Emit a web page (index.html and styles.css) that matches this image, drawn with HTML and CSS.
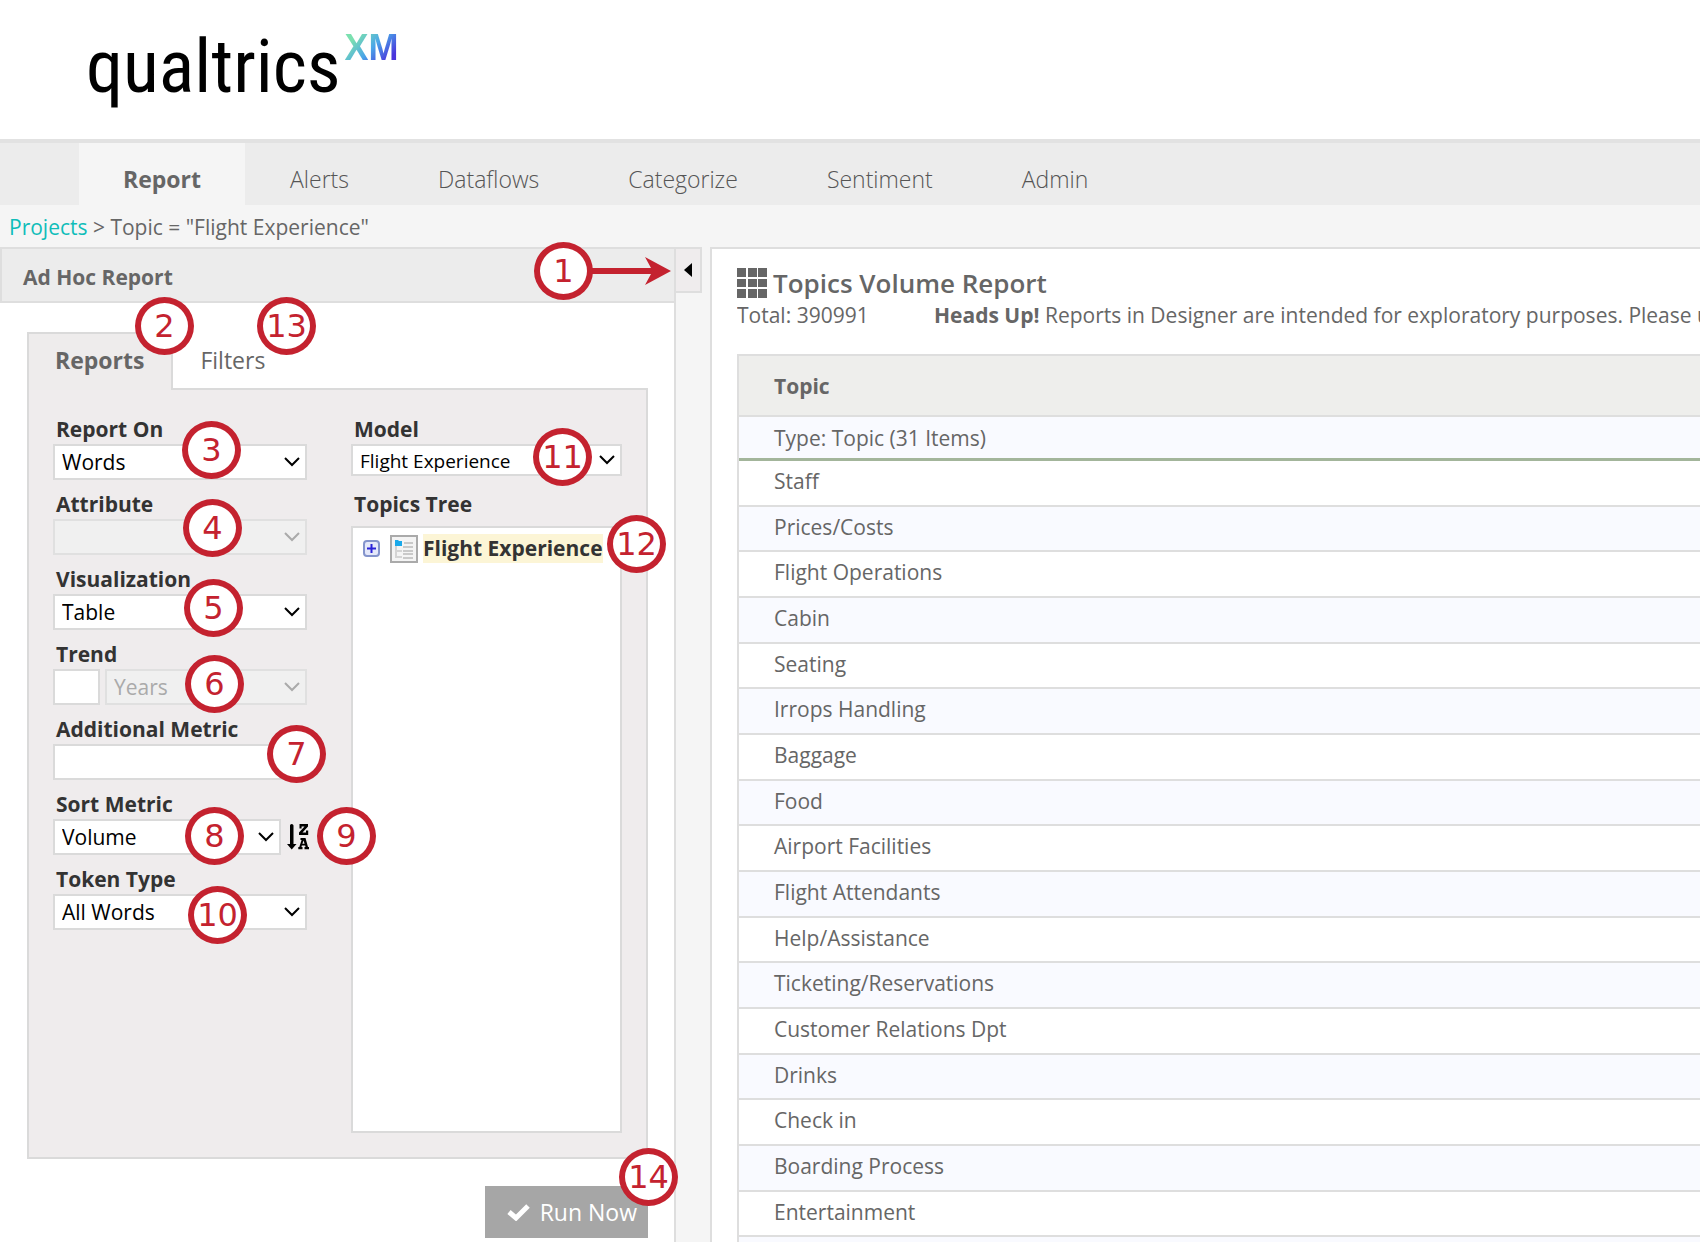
FILE: index.html
```html
<!DOCTYPE html>
<html lang="en">
<head>
<meta charset="utf-8">
<title>Topics Volume Report</title>
<link rel="stylesheet" href="styles.css">
</head>
<body>
<div class="app">
  <header class="masthead">
    <div class="logo">qualtrics<sup class="logo-xm">XM</sup></div>
  </header>

  <nav class="main-nav">
    <a class="active" href="#">Report</a>
    <a href="#">Alerts</a>
    <a href="#">Dataflows</a>
    <a href="#">Categorize</a>
    <a href="#">Sentiment</a>
    <a href="#">Admin</a>
  </nav>

  <div class="breadcrumb"><a href="#">Projects</a> &gt; Topic = "Flight Experience"</div>

  <main class="workspace">
    <section class="sidebar">
      <h2 class="sidebar-title">Ad Hoc Report</h2>
      <div class="sidebar-body">
        <div class="tabs">
          <button class="tab tab-active" type="button">Reports</button>
          <button class="tab" type="button">Filters</button>
        </div>
        <form class="settings">
          <div class="fields">
            <div class="field">
              <label for="report-on">Report On</label>
              <select id="report-on"><option>Words</option></select>
            </div>
            <div class="field">
              <label for="attribute">Attribute</label>
              <select id="attribute" disabled><option></option></select>
            </div>
            <div class="field">
              <label for="visualization">Visualization</label>
              <select id="visualization"><option>Table</option></select>
            </div>
            <div class="field">
              <label for="trend">Trend</label>
              <div class="field-row">
                <input class="trend-count" id="trend" type="text">
                <select aria-label="Trend period" disabled><option>Years</option></select>
              </div>
            </div>
            <div class="field">
              <label for="metric">Additional Metric</label>
              <input id="metric" type="text">
            </div>
            <div class="field">
              <label for="sort">Sort Metric</label>
              <div class="field-row">
                <select id="sort"><option>Volume</option></select>
                <button class="sort-order" type="button" aria-label="Sort descending">
                  <svg width="22" height="26" viewBox="0 0 22 26"><path d="M3 1.500Q3 0 4.700 0T6.500 1.500V20H9.500L4.700 25.500 0 20H3z"/><path d="M12.500 0H21V2.500L15.500 8.500H19V6.500H21.200V11H12V8.500L17.500 2.500H14.600V4.500H12.500z"/><path fill-rule="evenodd" d="M13.500 14H18.500L21 23H22V25.200H17.500V23H18.500L18.200 21.600H14.800L14.500 23H15.500V25.200H11.300V23H12.300L14.600 16H13.500zM16.500 16.500L15.400 19.700H17.600z"/></svg>
                </button>
              </div>
            </div>
            <div class="field">
              <label for="token">Token Type</label>
              <select id="token"><option>All Words</option></select>
            </div>
          </div>
          <div class="model">
            <label for="model">Model</label>
            <select class="model-select" id="model"><option>Flight Experience</option></select>
            <h3 class="tree-title">Topics Tree</h3>
            <div class="tree">
              <div class="tree-node">
                <button class="expander" type="button" aria-label="Expand">
                  <svg width="17" height="17" viewBox="0 0 17 17"><rect x="1" y="1" width="15" height="15" rx="3" fill="#e4e8fa" stroke="#8494cc" stroke-width="2"/><path d="M8.500 4v9M4 8.500h9" stroke="#2a22d8" stroke-width="2"/></svg>
                </button>
                <svg class="node-icon" width="28" height="28" viewBox="0 0 28 28"><rect x="1" y="1" width="26" height="26" fill="#f4f4f4" stroke="#aaa" stroke-width="2"/><path d="M6 11v11h6M6 16h6" stroke="#d4d4d4" stroke-width="2" fill="none"/><path d="M14 8h9M13 12h10M13 16h10M13 19h10M13 23h10" stroke="#c9c9c9" stroke-width="2" fill="none"/><path d="M5 5h3l1 1h3v5H5z" fill="#1ba9ea"/></svg>
                <span class="node-label">Flight Experience</span>
              </div>
            </div>
          </div>
        </form>
        <button class="run" type="button">
          <svg width="23" height="18" viewBox="0 0 23 18"><path d="M2 9l7 6L21 3" fill="none" stroke="#fff" stroke-width="5"/></svg>
          Run Now
        </button>
      </div>
    </section>

    <button class="collapse" type="button" aria-label="Collapse panel">
      <svg width="8" height="14" viewBox="0 0 8 14"><path d="M8 0v14L0 7z"/></svg>
    </button>

    <section class="report">
      <h1 class="report-title">
        <svg width="30" height="30" viewBox="0 0 30 30"><path d="M0 0h9v9H0zM11 0h9v9h-9zM21 0h9v9h-9zM0 11h9v8H0zM11 11h9v8h-9zM21 11h9v8h-9zM0 21h9v9H0zM11 21h9v9h-9zM21 21h9v9h-9z"/></svg>
        Topics Volume Report
      </h1>
      <p class="summary"><span class="total">Total: 390991</span><span><strong>Heads Up!</strong> Reports in Designer are intended for exploratory purposes. Please use</span></p>
      <table class="topics">
        <thead><tr><th scope="col">Topic</th></tr></thead>
        <tbody>
          <tr class="type-row"><td>Type: Topic (31 Items)</td></tr>
          <tr><td>Staff</td></tr>
          <tr><td>Prices/Costs</td></tr>
          <tr><td>Flight Operations</td></tr>
          <tr><td>Cabin</td></tr>
          <tr><td>Seating</td></tr>
          <tr><td>Irrops Handling</td></tr>
          <tr><td>Baggage</td></tr>
          <tr><td>Food</td></tr>
          <tr><td>Airport Facilities</td></tr>
          <tr><td>Flight Attendants</td></tr>
          <tr><td>Help/Assistance</td></tr>
          <tr><td>Ticketing/Reservations</td></tr>
          <tr><td>Customer Relations Dpt</td></tr>
          <tr><td>Drinks</td></tr>
          <tr><td>Check in</td></tr>
          <tr><td>Boarding Process</td></tr>
          <tr><td>Entertainment</td></tr>
          <tr><td></td></tr>
        </tbody>
      </table>
    </section>
  </main>

  <svg class="arrow" width="80" height="28" viewBox="0 0 80 28"><path d="M0 11h60L54 0l26 14-26 14 6-11H0z"/></svg>
  <span class="badge b1">1</span>
  <span class="badge b2">2</span>
  <span class="badge b3">3</span>
  <span class="badge b4">4</span>
  <span class="badge b5">5</span>
  <span class="badge b6">6</span>
  <span class="badge b7">7</span>
  <span class="badge b8">8</span>
  <span class="badge b9">9</span>
  <span class="badge b10">10</span>
  <span class="badge b11">11</span>
  <span class="badge b12">12</span>
  <span class="badge b13">13</span>
  <span class="badge b14">14</span>
</div>
</body>
</html>
```
FILE: styles.css
```css
* { box-sizing: border-box; }

body {
  margin: 0;
  background: #f5f5f5;
  color: #666;
  font: 21px/30px "Open Sans", "Noto Sans", sans-serif;
}

h1, h2, h3, p { margin: 0; }

button, input, select { font: inherit; color: inherit; border-radius: 0; }

button { padding: 0; border: 0; background: none; }

.app {
  position: relative;
  display: flex;
  flex-direction: column;
  height: 100vh;
  overflow: hidden;
}

/* Header */
.masthead {
  flex: none;
  height: 139px;
  padding: 17px 0 0 86px;
  background: #fff;
}

.logo {
  display: flex;
  align-items: flex-start;
  gap: 4px;
  color: #000;
  font: 74px/100px "Roboto Condensed", "Liberation Sans", sans-serif;
}

.logo-xm {
  margin-top: 11px;
  font: bold 36px/40px "Liberation Sans", sans-serif;
  background: linear-gradient(135deg, #7be0b0 20%, #4aa6e8 50%, #4a35dc 80%);
  background-clip: text;
  color: transparent;
}

.main-nav {
  flex: none;
  display: flex;
  gap: 1px;
  height: 66px;
  padding-left: 79px;
  border-top: 4px solid #e2e2e2;
  background: #ececec;
}

.main-nav a {
  padding: 21px 44px 0;
  color: #555;
  font-size: 23px;
  font-weight: 300;
  text-decoration: none;
}

.main-nav .active { background: #f5f5f5; color: #666; font-weight: 700; }

.breadcrumb { flex: none; height: 42px; padding: 7px 9px 0; }
.breadcrumb a { color: #0fbdb9; text-decoration: none; }

.workspace { flex: 1; display: flex; min-height: 0; }

/* Left panel */
.sidebar {
  flex: none;
  width: 676px;
  border-top: 2px solid #dedede;
  border-right: 2px solid #dedede;
  background: #fff;
}

.sidebar-title {
  height: 54px;
  padding: 13px 21px 0;
  border-bottom: 2px solid #dedede;
  border-left: 2px solid #dedede;
  background: #ececec;
  font-size: 21px;
  line-height: 30px;
}

.sidebar-body { display: flex; flex-direction: column; padding: 29px 26px 0 27px; }

.tabs { display: flex; height: 56px; }

.tab { padding: 0 27px; font-size: 23px; line-height: 56px; }

.tab-active {
  position: relative;
  height: 58px;
  padding: 0 27px 5px 26px;
  border: 2px solid #dadada;
  border-bottom: 0;
  background: #eeecec;
  font-weight: 700;
  line-height: 30px;
}

.settings {
  display: flex;
  gap: 44px;
  height: 771px;
  padding: 24px;
  border: 2px solid #dadada;
  background: #efeced;
}

.fields { flex: none; width: 254px; }

.field { height: 75px; }

label, .tree-title {
  display: block;
  padding-left: 3px;
  color: #333;
  font-size: 21px;
  font-weight: 700;
  line-height: 30px;
}

.field-row { display: flex; gap: 5px; }

select, input {
  display: block;
  width: 100%;
  height: 36px;
  padding: 0 7px;
  border: 2px solid #dadada;
  background: #fff;
  color: #000;
}

select {
  flex: 1;
  appearance: none;
  background: #fff url("data:image/svg+xml,%3Csvg xmlns='http://www.w3.org/2000/svg' width='16' height='10'%3E%3Cpath d='M1 1l7 7 7-7' fill='none' stroke='black' stroke-width='2'/%3E%3C/svg%3E") no-repeat right 5px center;
}

select:disabled {
  border-color: #e0e0e0;
  background-color: #f0f0f0;
  background-image: url("data:image/svg+xml,%3Csvg xmlns='http://www.w3.org/2000/svg' width='16' height='10'%3E%3Cpath d='M1 1l7 7 7-7' fill='none' stroke='%23aaa' stroke-width='2'/%3E%3C/svg%3E");
  color: #aaa;
  opacity: 1;
}

.field-row .trend-count { width: 47px; }

.sort-order {
  display: flex;
  flex: none;
  align-items: center;
  width: 22px;
  margin: 0 -2px 0 1px;
}

.model { flex: 1; display: flex; flex-direction: column; min-width: 0; }

.model .model-select { flex: none; height: 32px; font-size: 19px; }

.tree-title { margin: 13px 0 7px; }

.tree { flex: 1; padding: 6px 10px; border: 2px solid #dadada; background: #fff; }

.tree-node { display: flex; align-items: center; }

.expander { display: flex; margin-right: 10px; }

.node-icon { flex: none; }

.node-label {
  margin-left: 5px;
  background: #fcf5d6;
  color: #333;
  font-weight: 700;
  line-height: 29px;
  white-space: nowrap;
}

.run {
  display: flex;
  align-items: center;
  justify-content: flex-end;
  gap: 10px;
  align-self: flex-end;
  width: 163px;
  height: 52px;
  margin-top: 27px;
  padding-right: 11px;
  background: #a6a6a6;
  color: #fff;
  font-size: 23px;
}

.collapse {
  display: flex;
  align-items: center;
  justify-content: center;
  flex: none;
  width: 26px;
  height: 46px;
  margin-right: 8px;
  border: 2px solid #dedede;
  border-left: 0;
  background: #efeced;
}

/* Report */
.report {
  flex: 1;
  min-width: 0;
  padding: 16px 0 0 25px;
  border: 2px solid #dedede;
  border-width: 2px 0 0 2px;
  background: #fff;
}

.report-title {
  display: flex;
  align-items: center;
  gap: 6px;
  height: 35px;
  font-size: 26px;
  font-weight: 600;
}

.report-title svg { fill: #666; }

.summary { display: flex; overflow: hidden; white-space: nowrap; }

.total { flex: none; width: 197px; }

.topics {
  width: 100%;
  margin-top: 24px;
  border-left: 2px solid #dedede;
  border-collapse: separate;
  border-spacing: 0;
}

.topics th {
  height: 63px;
  padding: 0 35px;
  border-top: 2px solid #dedede;
  border-bottom: 2px solid #dedede;
  background: #eeeeec;
  text-align: left;
}

.topics td {
  height: 46px;
  padding: 0 35px 4px;
  border-bottom: 2px solid #dedede;
  background: #fff;
}

.topics tr:nth-child(3n) td { height: 45px; }

.topics tbody tr:nth-child(odd) td { background: #f9faff; }

.topics .type-row td { height: 44px; padding-bottom: 0; border-bottom: 3px solid #a3b59b; }

/* Numbered callouts */
.badge {
  position: absolute;
  width: 59px;
  height: 58px;
  border: 6px solid #c4222f;
  border-radius: 50%;
  background: #fff;
  color: #c4222f;
  font: 32px/46px "DejaVu Sans", sans-serif;
  text-align: center;
}

.b1 { left: 534px; top: 242px; }
.b2 { left: 135px; top: 297px; }
.b3 { left: 182px; top: 421px; }
.b4 { left: 183px; top: 499px; }
.b5 { left: 184px; top: 579px; }
.b6 { left: 185px; top: 655px; }
.b7 { left: 267px; top: 725px; }
.b8 { left: 185px; top: 807px; }
.b9 { left: 317px; top: 807px; }
.b10 { left: 188px; top: 886px; }
.b11 { left: 533px; top: 428px; }
.b12 { left: 607px; top: 515px; }
.b13 { left: 257px; top: 297px; }
.b14 { left: 619px; top: 1148px; }

.arrow { position: absolute; left: 591px; top: 257px; fill: #c4222f; }
```
